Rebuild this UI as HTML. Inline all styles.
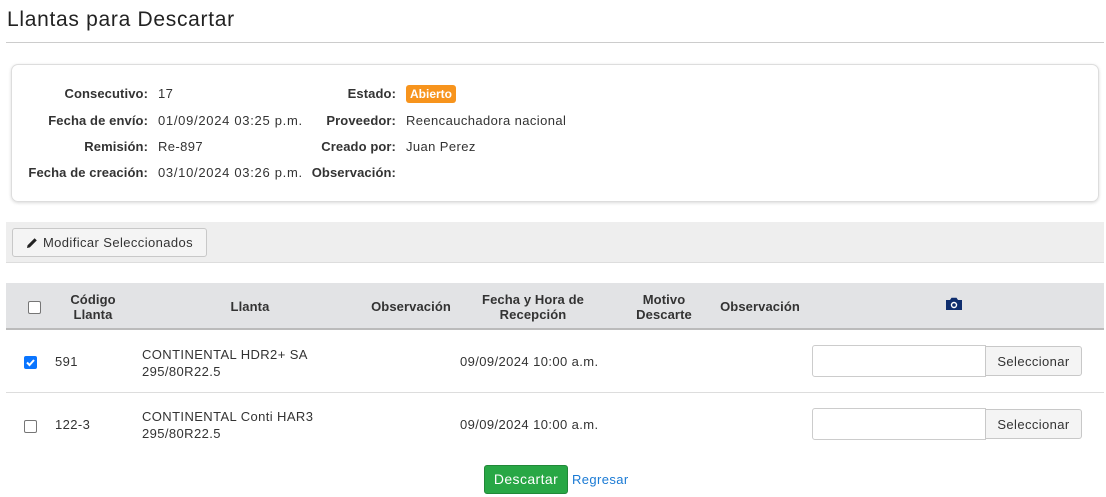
<!DOCTYPE html>
<html><head><meta charset="utf-8"><style>
*{margin:0;padding:0;box-sizing:border-box}
body{width:1106px;height:497px;background:#fff;font-family:"Liberation Sans",sans-serif;font-size:13px;color:#333;position:relative;overflow:hidden;letter-spacing:0.4px}
.a{position:absolute;white-space:nowrap}
.lb{text-align:right;font-weight:bold;color:#333;letter-spacing:0.1px}
.h{font-weight:bold;text-align:center;color:#333;line-height:15px;letter-spacing:0.1px}
.btn{position:absolute;border:1px solid #c8c8c8;background:#f4f4f4;border-radius:3px;color:#333;font-size:13px;display:flex;align-items:center;justify-content:center}
.inp{position:absolute;border:1px solid #ccc;border-radius:3px 0 0 3px;background:#fff}
.cb{position:absolute;width:13px;height:13px;border:1px solid #767676;border-radius:2px;background:#fff}
</style></head><body>
<div class="a" style="left:7px;top:8px;font-size:21px;color:#222;letter-spacing:0.7px">Llantas para Descartar</div>
<div class="a" style="left:6px;top:42px;width:1098px;height:1px;background:#ccc"></div>
<div class="a" style="left:11px;top:64px;width:1088px;height:138px;border:1px solid #ddd;border-radius:7px;box-shadow:0 1px 3px rgba(0,0,0,.15)"></div>
<div class="a lb" style="left:0;width:148px;top:86px">Consecutivo:</div>
<div class="a lb" style="left:0;width:148px;top:113px">Fecha de envío:</div>
<div class="a lb" style="left:0;width:148px;top:139px">Remisión:</div>
<div class="a lb" style="left:0;width:148px;top:165px">Fecha de creación:</div>
<div class="a" style="left:158px;top:86px">17</div>
<div class="a" style="left:158px;top:113px;letter-spacing:0.7px">01/09/2024 03:25 p.m.</div>
<div class="a" style="left:158px;top:139px">Re-897</div>
<div class="a" style="left:158px;top:165px;letter-spacing:0.7px">03/10/2024 03:26 p.m.</div>
<div class="a lb" style="left:250px;width:146px;top:86px">Estado:</div>
<div class="a lb" style="left:250px;width:146px;top:113px">Proveedor:</div>
<div class="a lb" style="left:250px;width:146px;top:139px">Creado por:</div>
<div class="a lb" style="left:250px;width:146px;top:165px">Observación:</div>
<div class="a" style="left:406px;top:85px;width:50px;height:18px;background:#f7941d;border-radius:3px;color:#fff;font-weight:bold;font-size:12px;text-align:center;line-height:18px;letter-spacing:0">Abierto</div>
<div class="a" style="left:406px;top:113px">Reencauchadora nacional</div>
<div class="a" style="left:406px;top:139px">Juan Perez</div>
<div class="a" style="left:6px;top:222px;width:1098px;height:41px;background:#eee;border-bottom:1px solid #ddd"></div>
<div class="btn" style="left:12px;top:228px;width:195px;height:29px"><svg width="12" height="12" viewBox="0 0 12 12" style="margin-right:5px"><path d="M1 11 L1.6 8.2 L8.6 1.2 L10.8 3.4 L3.8 10.4 Z" fill="#222"/></svg>Modificar Seleccionados</div>
<div class="a" style="left:6px;top:283px;width:1098px;height:47px;background:#e2e3e5;border-bottom:2px solid #bbb"></div>
<div class="cb" style="left:28px;top:301px"></div>
<div class="a h" style="left:60px;width:66px;top:292px">Código<br>Llanta</div>
<div class="a h" style="left:200px;width:100px;top:299px">Llanta</div>
<div class="a h" style="left:361px;width:100px;top:299px">Observación</div>
<div class="a h" style="left:470px;width:126px;top:292px">Fecha y Hora de<br>Recepción</div>
<div class="a h" style="left:624px;width:80px;top:292px">Motivo<br>Descarte</div>
<div class="a h" style="left:710px;width:100px;top:299px">Observación</div>
<svg class="a" style="left:945px;top:297px" width="18" height="14" viewBox="0 0 18 14"><path d="M1 3h4l1.5-2.2h5L13 3h4v10H1z" fill="#0f2e6e"/><circle cx="9" cy="8" r="3.2" fill="#fff"/><circle cx="9" cy="8" r="1.8" fill="#0f2e6e"/></svg>
<div class="a" style="left:24px;top:356px;width:13px;height:13px;background:#0a75ff;border-radius:2px"><svg width="13" height="13" viewBox="0 0 13 13"><path d="M3 6.5l2.5 2.5L10 4" stroke="#fff" stroke-width="2" fill="none"/></svg></div>
<div class="a" style="left:55px;top:354px">591</div>
<div class="a" style="left:142px;top:346px;line-height:17px">CONTINENTAL HDR2+ SA<br>295/80R22.5</div>
<div class="a" style="left:460px;top:354px">09/09/2024 10:00 a.m.</div>
<div class="inp" style="left:812px;top:345px;width:174px;height:32px"></div>
<div class="btn" style="left:985px;top:346px;width:97px;height:30px;border-radius:0 3px 3px 0">Seleccionar</div>
<div class="a" style="left:6px;top:392px;width:1098px;height:1px;background:#ddd"></div>
<div class="cb" style="left:24px;top:420px"></div>
<div class="a" style="left:55px;top:417px">122-3</div>
<div class="a" style="left:142px;top:408px;line-height:17px">CONTINENTAL Conti HAR3<br>295/80R22.5</div>
<div class="a" style="left:460px;top:417px">09/09/2024 10:00 a.m.</div>
<div class="inp" style="left:812px;top:408px;width:174px;height:32px"></div>
<div class="btn" style="left:985px;top:409px;width:97px;height:30px;border-radius:0 3px 3px 0">Seleccionar</div>
<div class="a" style="left:484px;top:465px;width:84px;height:29px;background:#28a745;border:1px solid #218838;border-radius:3px;color:#fff;font-size:14px;text-align:center;line-height:27px">Descartar</div>
<div class="a" style="left:572px;top:472px;color:#1a7ad4">Regresar</div>
</body></html>
